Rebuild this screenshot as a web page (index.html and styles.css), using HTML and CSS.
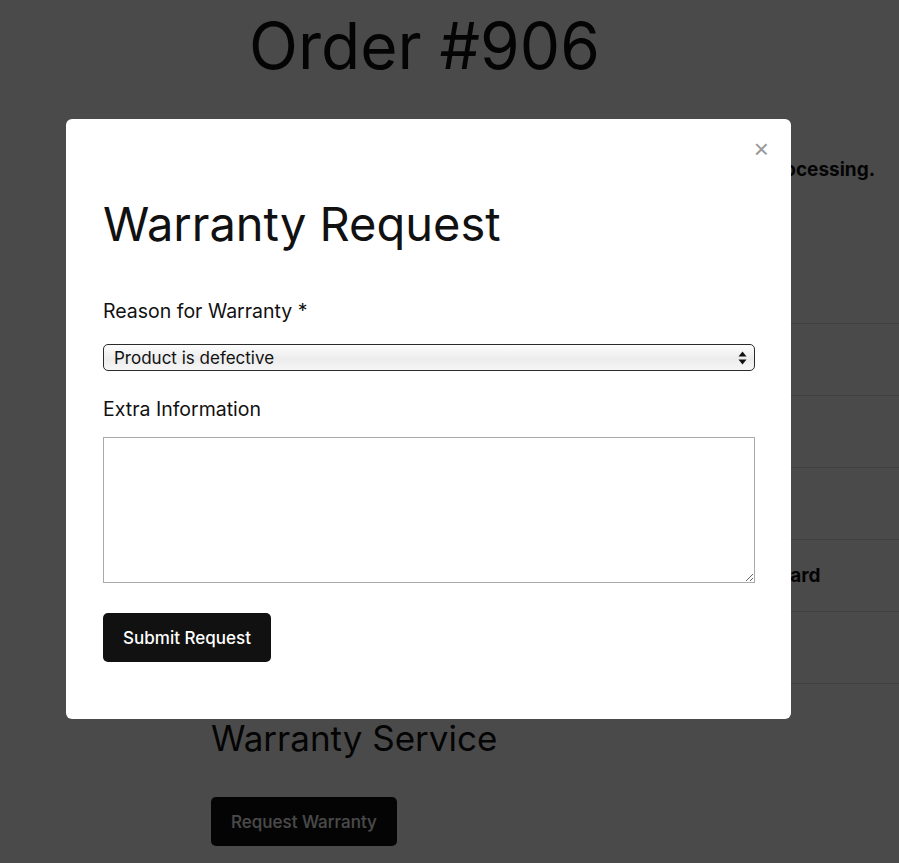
FILE: index.html
```html
<!DOCTYPE html>
<html lang="en">

<head>
    <meta charset="UTF-8">
    <meta name="viewport" content="width=device-width, initial-scale=1.0">
    <title>Order #906</title>
    <link rel="stylesheet" href="styles.css">
</head>

<body>
    <main class="page">
        <h1 class="order-title">Order #906</h1>
        <p class="order-status">Placed on 12 March 2024. Your order is currently <strong>Processing.</strong></p>

        <div class="details">
            <div class="row"><span>Items</span><span class="value">3</span></div>
            <div class="row"><span>Subtotal</span><span class="value">$249</span></div>
            <div class="row"><span>Shipping</span><span class="value">Free</span></div>
            <div class="row"><span>Payment</span><span class="value">Credit Card</span></div>
            <div class="row"><span>Total</span><span class="value">$249</span></div>
        </div>

        <h2 class="section-title">Warranty Service</h2>
        <button class="btn btn-dark" type="button">Request Warranty</button>
    </main>

    <div class="overlay">
        <div class="modal">
            <button class="modal-close" type="button" aria-label="Close">&times;</button>
            <h2 class="modal-title">Warranty Request</h2>

            <form id="warrantyForm" class="warranty-form">
                <label class="label-reason" for="reason">Reason for Warranty *</label>
                <div class="select-wrap">
                    <select id="reason" name="reason" required>
                        <option>Product is defective</option>
                        <option>Product arrived damaged</option>
                        <option>Missing parts</option>
                        <option>Other</option>
                    </select>
                    <svg class="select-arrows" width="9" height="14" viewBox="0 0 9 14">
                        <path d="M4.5 0.5 L8.5 5.5 L0.5 5.5 Z" fill="#111" />
                        <path d="M0.5 8.5 L8.5 8.5 L4.5 13.5 Z" fill="#111" />
                    </svg>
                </div>

                <label class="label-extra" for="extra">Extra Information</label>
                <textarea id="extra" name="extra"></textarea>

                <div>
                    <button class="btn btn-dark btn-submit" type="submit">Submit Request</button>
                </div>
            </form>
        </div>
    </div>
</body>

</html>
```

FILE: styles.css
```css
html {
    overflow: hidden;
}

body {
    margin: 0;
    font-family: Inter, "Noto Sans", sans-serif;
    color: #111;
    background: #fff;
}

.page {
    margin-left: 211px;
    width: 688px;
}

.order-title {
    margin: 0;
    padding: 8px 0 0 38px;
    font-size: 64px;
    font-weight: 400;
    line-height: 76px;
}

.order-status {
    margin: 74px 0 0;
    padding-right: 24px;
    text-align: right;
    font-size: 19px;
    white-space: nowrap;
}

.details {
    margin-top: 142px;
}

.row {
    display: grid;
    grid-template-columns: 504px 1fr;
    align-items: center;
    height: 72px;
    border-top: 1px solid #ddd;
    box-sizing: border-box;
    font-size: 19px;
}

.row:last-child {
    border-bottom: 1px solid #ddd;
    height: 73px;
}

.row .value {
    font-weight: 700;
}

.section-title {
    margin: 33px 0 0;
    font-size: 35px;
    font-weight: 400;
}

.btn {
    font-family: inherit;
    font-size: 17px;
    font-weight: 500;
    border: 0;
    border-radius: 5px;
    height: 49px;
    padding: 0 20px;
    cursor: pointer;
}

.btn-dark {
    background: #111;
    color: #fff;
}

.page .btn {
    margin-top: 38px;
}

.overlay {
    position: fixed;
    inset: 0;
    background: rgba(0, 0, 0, 0.71);
    display: flex;
    justify-content: center;
    align-items: flex-start;
    padding: 119px 42px 0 0;
}

.modal {
    position: relative;
    width: 725px;
    box-sizing: border-box;
    background: #fff;
    border-radius: 6px;
    padding: 70px 36px 57px 37px;
}

.modal-close {
    position: absolute;
    top: 18px;
    right: 22px;
    border: 0;
    background: none;
    color: #999;
    font-size: 26px;
    line-height: 24px;
    padding: 0;
    cursor: pointer;
}

.modal-title {
    margin: 0 0 40px;
    font-size: 47px;
    font-weight: 400;
    line-height: 70px;
}

.warranty-form {
    display: flex;
    flex-direction: column;
}

.warranty-form label {
    font-size: 19.5px;
    line-height: 24px;
}

.label-reason {
    margin-bottom: 21px;
}

.label-extra {
    margin-bottom: 16px;
}

.select-wrap {
    position: relative;
    margin-bottom: 26px;
}

.select-wrap select {
    appearance: none;
    width: 100%;
    height: 27px;
    border: 1px solid #2b2b2b;
    border-radius: 5px;
    background: linear-gradient(#fdfdfd, #ececec 55%, #f6f6f6);
    font-family: inherit;
    font-size: 17px;
    color: #111;
    padding: 0 10px;
}

.select-arrows {
    position: absolute;
    right: 8px;
    top: 7px;
    pointer-events: none;
}

.warranty-form textarea {
    height: 146px;
    box-sizing: border-box;
    border: 1px solid #aaa;
    margin: 0 0 30px;
    font-family: inherit;
    font-size: 16px;
}

.btn-submit {
    padding: 0 20px;
    width: 168px;
}
```
